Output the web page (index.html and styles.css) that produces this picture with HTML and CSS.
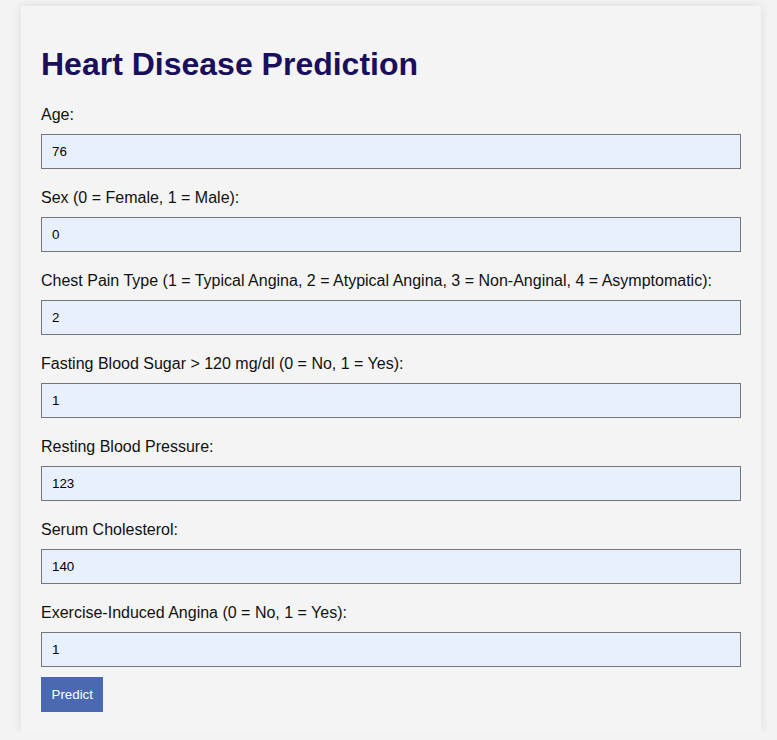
FILE: index.html
```html
<!DOCTYPE html>
<html>
<head>
<meta charset="utf-8">
<link rel="stylesheet" href="styles.css">
</head>
<body>
<div class="container">
  <h1 class="title">Heart Disease Prediction</h1>
  <form class="form">
    <div class="field"><label class="label">Age:</label><input class="input" type="text" value="76"></div>
    <div class="field"><label class="label">Sex (0 = Female, 1 = Male):</label><input class="input" type="text" value="0"></div>
    <div class="field"><label class="label">Chest Pain Type (1 = Typical Angina, 2 = Atypical Angina, 3 = Non-Anginal, 4 = Asymptomatic):</label><input class="input" type="text" value="2"></div>
    <div class="field"><label class="label">Fasting Blood Sugar &gt; 120 mg/dl (0 = No, 1 = Yes):</label><input class="input" type="text" value="1"></div>
    <div class="field"><label class="label">Resting Blood Pressure:</label><input class="input" type="text" value="123"></div>
    <div class="field"><label class="label">Serum Cholesterol:</label><input class="input" type="text" value="140"></div>
    <div class="field"><label class="label">Exercise-Induced Angina (0 = No, 1 = Yes):</label><input class="input" type="text" value="1"></div>
    <button class="button" type="button">Predict</button>
  </form>
</div>
</body>
</html>
```
FILE: styles.css
```css
html, body {
  margin: 0;
  background: #f3f3f3;
  font-family: "Liberation Sans", Arial, sans-serif;
}
.container {
  width: 700px;
  margin: 6px 0 0 21px;
  padding: 20px;
  background: #f4f4f4;
  box-shadow: 0 0 10px rgba(0, 0, 0, 0.1);
}
.title {
  font-size: 32px;
  font-weight: bold;
  color: #1a0f5c;
  margin: 19.5px 0 23.5px;
}
.form {
  display: flex;
  flex-direction: column;
}
.field {
  display: flex;
  flex-direction: column;
  margin-bottom: 20px;
}
.field:last-of-type {
  margin-bottom: 10px;
}
.label {
  font-size: 16px;
  color: #111;
  line-height: 18px;
  margin-bottom: 10px;
}
.input {
  box-sizing: border-box;
  width: 700px;
  height: 35px;
  padding: 0 10px;
  border: 1px solid #767676;
  background: #e8f0fe;
  font-family: "Liberation Sans", Arial, sans-serif;
  font-size: 13.33px;
  color: #000;
  margin: 0;
}
.button {
  align-self: flex-start;
  height: 35px;
  padding: 0 10.5px;
  border: none;
  background: #4a69b0;
  color: #fff;
  font-family: "Liberation Sans", Arial, sans-serif;
  font-size: 13.33px;
}
```
